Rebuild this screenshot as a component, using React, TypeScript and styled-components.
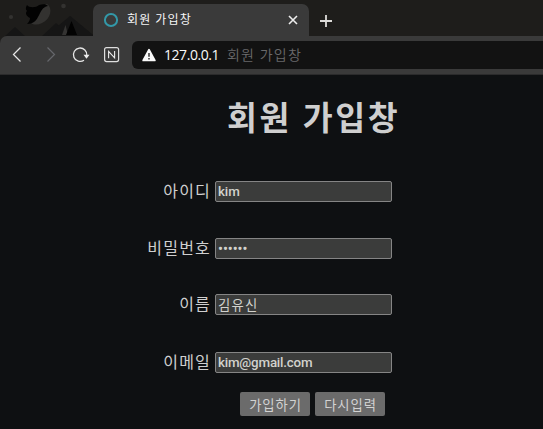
import React from "react";
import styled, { createGlobalStyle } from "styled-components";

const GlobalStyle = createGlobalStyle`
  * { box-sizing: border-box; }
  body {
    margin: 0;
    overflow: hidden;
    background: #0e1012;
    font-family: Roboto, "Noto Sans CJK KR", sans-serif;
  }
`;

const Browser = styled.div`
  height: 429px;
  display: flex;
  flex-direction: column;
  overflow: hidden;
  background: #0e1012;
`;

const TabBar = styled.div`
  height: 36px;
  flex: none;
  display: flex;
  align-items: flex-end;
  background: #1e1d1b;
`;

const ThemeArt = styled.svg`
  flex: none;
  width: 93px;
  height: 36px;
`;

const Tab = styled.div`
  width: 216px;
  height: 32px;
  padding: 0 10px;
  display: flex;
  align-items: center;
  border-radius: 7px 7px 0 0;
  background: #3a3a3a;
`;

const TabTitle = styled.span`
  flex: 1;
  margin-left: 8px;
  color: #f6f6f6;
  font-size: 12px;
  line-height: 16px;
  letter-spacing: 1.1px;
  white-space: nowrap;
`;

const Icon = styled.svg`
  flex: none;
  display: block;
`;

const NewTab = styled.div`
  height: 32px;
  padding: 10px 0 0 10px;
`;

const Toolbar = styled.div`
  height: 39px;
  flex: none;
  display: flex;
  align-items: center;
  background: #3a3a3a;
  border-bottom: 1px solid #2b2b2c;
  border-top-left-radius: 7px;
`;

const ToolbarShell = styled.div`
  flex: none;
  background: #1e1d1b;
`;

const NavIcons = styled.div`
  width: 132px;
  height: 38px;
  flex: none;
`;

const AddressBar = styled.div`
  flex: 1;
  height: 28px;
  padding-left: 10px;
  display: flex;
  align-items: center;
  border-radius: 6px 0 0 6px;
  background: #121212;
`;

const Host = styled.span`
  margin-left: 8px;
  color: #fafafa;
  font: 14px/20px "Open Sans", sans-serif;
  letter-spacing: -0.45px;
`;

const PageName = styled.span`
  margin-left: 8px;
  color: #69696b;
  font-size: 14px;
  line-height: 20px;
  letter-spacing: 1.2px;
  font-weight: 350;
`;

const Page = styled.main`
  flex: 1;
  color: #cfcfcf;
`;

const Title = styled.h1`
  margin: 20px 0 0 227px;
  height: 46px;
  font-size: 32.5px;
  line-height: 48px;
  letter-spacing: 2.6px;
  font-weight: 700;
  white-space: nowrap;
`;

const Form = styled.form`
  margin-top: 40px;
`;

const Field = styled.div<{ $height: number }>`
  height: ${(p) => p.$height}px;
  display: grid;
  grid-template-columns: 211px 177px;
  column-gap: 4px;
  align-items: start;
`;

const Label = styled.label`
  padding-top: 1px;
  text-align: right;
  font-size: 16px;
  line-height: 20px;
  letter-spacing: 1.2px;
`;

const Input = styled.input<{ $tracking: number }>`
  width: 177px;
  height: 21px;
  padding: 1px 2px;
  border: 1px solid #858585;
  border-radius: 2px;
  outline: none;
  background: #3b3c3b;
  color: #d2d2cd;
  font: 500 13.33px Roboto, "Noto Sans CJK KR", sans-serif;
  font-weight: ${(p) => (p.$tracking > 0 ? 400 : 500)};
  letter-spacing: ${(p) => p.$tracking}px;

  &[type="password"] {
    font-size: 14px;
  }
`;

const Actions = styled.div`
  display: flex;
  gap: 5px;
  padding-left: 240px;
`;

const Button = styled.button`
  width: 70px;
  height: 24px;
  padding: 0 0 0 1px;
  border: 0;
  border-radius: 2px;
  background: #6b6b6b;
  color: #d2d2d2;
  font: 13.33px "Noto Sans CJK KR", sans-serif;
  letter-spacing: 0.9px;
`;

const fields = [
  { label: "아이디", value: "kim", type: "text", height: 57, tracking: -0.1 },
  { label: "비밀번호", value: "secret", type: "password", height: 56, tracking: 0 },
  { label: "이름", value: "김유신", type: "text", height: 58, tracking: 1.2 },
  { label: "이메일", value: "kim@gmail.com", type: "text", height: 40, tracking: -0.2 },
];

export default function App() {
  return (
    <>
      <GlobalStyle />
      <Browser>
        <TabBar>
          <ThemeArt viewBox="0 0 93 36">
            <circle cx="11" cy="17" r="2.1" fill="#333230" />
            <circle cx="63.5" cy="6" r="2.3" fill="#333230" />
            <path d="M5 36L15 27L25 36ZM42 36L56 23L62 28L70 16L93 35V36Z" fill="#151515" />
            <path d="M53 30L70 16L93 35V36H48Z" fill="#151515" />
            <path d="M62 35L65.5 25L68 35Z" fill="#343332" />
            <path d="M66 35L71.5 21L77 35Z" fill="#020202" />
            <path d="M47 4C53 8 51 19 42 23C38 25 34 25 31 23C38 20 37 14 40 9C42 7 43 5 47 4Z" fill="#333230" />
            <path d="M27 5C29 8 36 8 39 5C43 4 46 4 48 6C42 7 41 12 38 17C36 21 33 24 27 24C29 22 30 20 30 18C26 16 25 13 27 11C25 9 26 7 27 5Z" fill="#020202" />
          </ThemeArt>
          <Tab>
            <Icon width="16" height="16" viewBox="0 0 16 16">
              <circle cx="8" cy="8" r="6.1" fill="none" stroke="#3398a8" strokeWidth="2" />
            </Icon>
            <TabTitle>회원 가입창</TabTitle>
            <Icon width="12" height="12" viewBox="0 0 12 12">
              <path d="M2 2L10 10M10 2L2 10" stroke="#ededed" strokeWidth="1.6" />
            </Icon>
          </Tab>
          <NewTab>
            <Icon width="14" height="14" viewBox="0 0 14 14">
              <path d="M1 7H13M7 1V13" stroke="#dddcda" strokeWidth="1.8" />
            </Icon>
          </NewTab>
        </TabBar>
        <ToolbarShell>
          <Toolbar>
            <NavIcons>
              <Icon width="132" height="38" viewBox="0 0 132 38" fill="none">
                <path d="M20.5 11.5L13.5 18.5L20.5 25.5" stroke="#e7e7e7" strokeWidth="1.25" />
                <path d="M47.5 11.5L54.5 18.5L47.5 25.5" stroke="#66676c" strokeWidth="1.2" />
                <path d="M84 24.2A6.7 6.7 0 1 1 86.8 19.5" stroke="#e7e7e7" strokeWidth="1.3" />
                <path d="M83.5 18.7H89.5L86.5 22.7Z" fill="#eeeeee" />
                <rect x="104.6" y="11.6" width="14" height="14" rx="2" stroke="#dedede" strokeWidth="1.2" />
                <path d="M108.6 22.2V15.3L114.6 21.8V14.9" stroke="#ededed" strokeWidth="1.1" />
              </Icon>
            </NavIcons>
            <AddressBar>
              <Icon width="14" height="14" viewBox="0 0 14 14">
                <path d="M7 1.8L12.8 12.4H1.2Z" fill="#fafafa" stroke="#fafafa" strokeWidth="1.8" strokeLinejoin="round" />
                <path d="M7 5V8.8M7 10V11.5" stroke="#161616" strokeWidth="1.3" />
              </Icon>
              <Host>127.0.0.1</Host>
              <PageName>회원 가입창</PageName>
            </AddressBar>
          </Toolbar>
        </ToolbarShell>
        <Page>
          <Title>회원 가입창</Title>
          <Form>
            {fields.map((field, index) => (
              <Field key={field.label} $height={field.height}>
                <Label htmlFor={`field-${index}`}>{field.label}</Label>
                <Input
                  id={`field-${index}`}
                  type={field.type}
                  defaultValue={field.value}
                  $tracking={field.tracking}
                />
              </Field>
            ))}
            <Actions>
              <Button type="button">가입하기</Button>
              <Button type="reset">다시입력</Button>
            </Actions>
          </Form>
        </Page>
      </Browser>
    </>
  );
}
